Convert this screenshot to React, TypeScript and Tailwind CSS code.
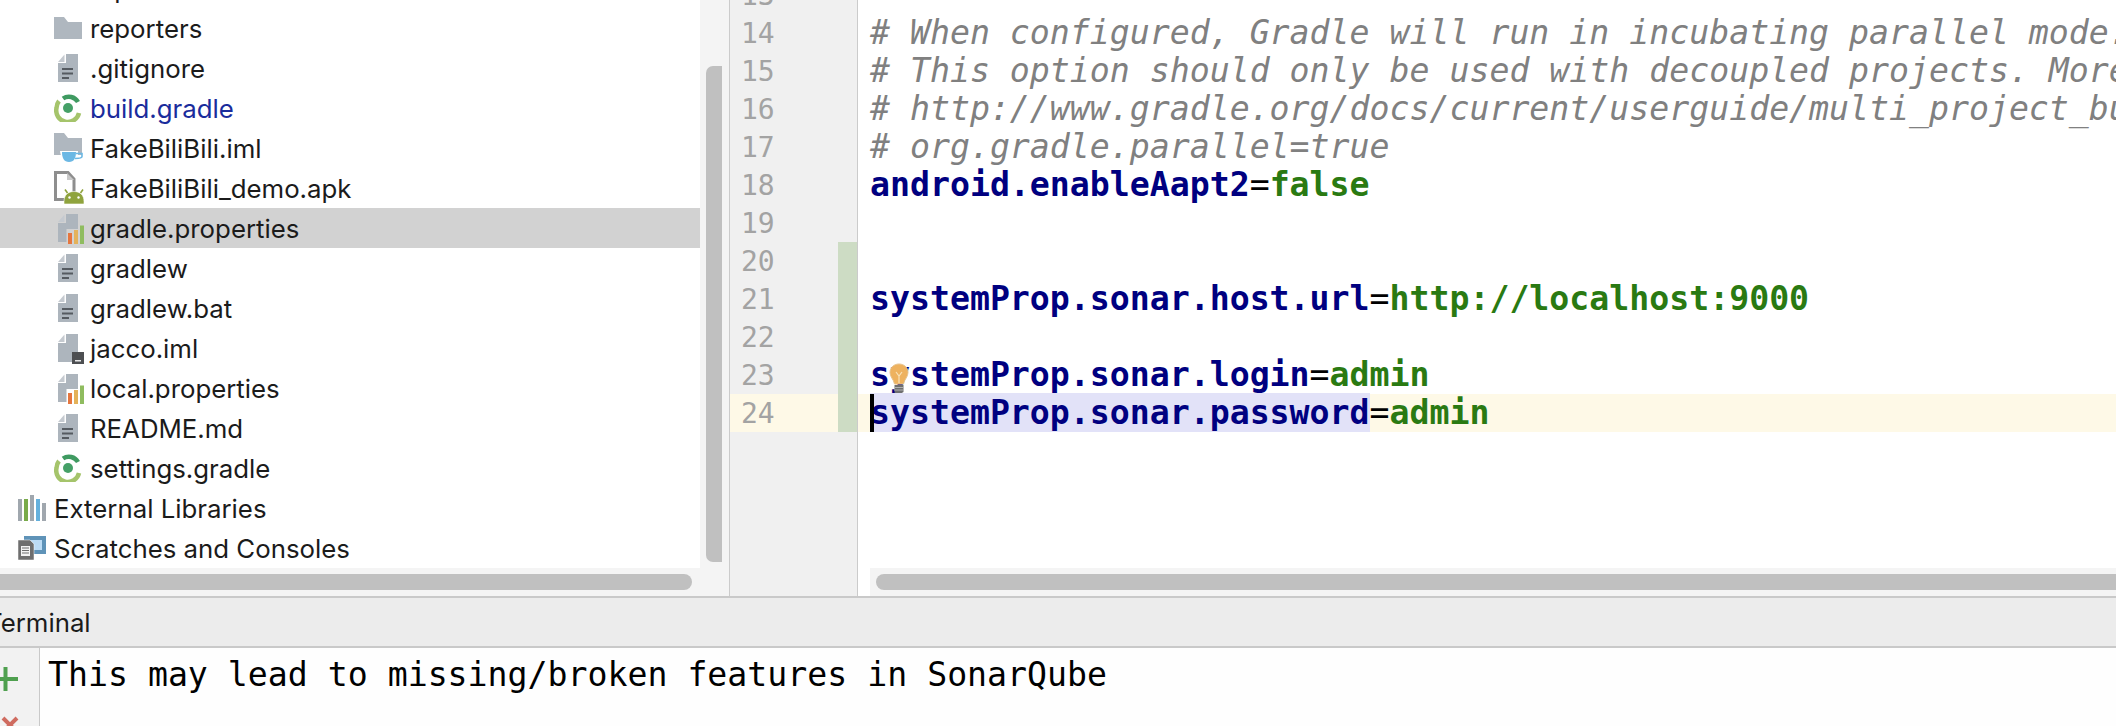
import React from 'react';

const MONO = "font-['DejaVu_Sans_Mono',monospace]";

const FileBase: React.FC<{ children?: React.ReactNode }> = ({ children }) => (
  <svg width="30" height="30" viewBox="0 0 30 30" className="shrink-0 overflow-visible">
    <path d="M4 1.5 V29 H24 V1 H12 V10 H4 Z" fill="#adb5bd" />
    <path d="M4 9 L10.5 1.5 V9 Z" fill="#c5cad0" />
    {children}
  </svg>
);

const TextFileIcon = () => (
  <FileBase>
    <rect x="8" y="15" width="11" height="2" fill="#555a60" />
    <rect x="8" y="19.5" width="11" height="2" fill="#555a60" />
    <rect x="8" y="24" width="7" height="2" fill="#555a60" />
  </FileBase>
);

const PropsIcon = () => (
  <svg width="30" height="30" viewBox="0 0 30 30" className="shrink-0 overflow-visible">
    <path d="M4 10 H12 V1 H24 V16 H12.5 V29 H4 Z" fill="#adb5bd" />
    <path d="M4 9 L10.5 1.5 V9 Z" fill="#c5cad0" />
    <rect x="14" y="20" width="4" height="11" fill="#e5763f" />
    <rect x="20" y="17" width="4" height="14" fill="#e4b25a" />
    <rect x="26" y="12.5" width="4" height="18.5" fill="#8fbc5f" />
  </svg>
);

const ImlIcon = () => (
  <FileBase>
    <rect x="18" y="19" width="12" height="12" fill="#4d4f52" />
    <rect x="21" y="27" width="6" height="1.5" fill="#e8e8e8" />
  </FileBase>
);

const FolderIcon = () => (
  <svg width="28" height="22" viewBox="0 0 28 22" className="shrink-0">
    <path d="M0 0 H10 L14 5 H28 V22 H0 Z" fill="#afb7bf" />
  </svg>
);

const ModuleIcon = () => (
  <svg width="30" height="30" viewBox="0 0 30 30" className="shrink-0">
    <path d="M0 0 H10 L14 5 H28 V22 H0 Z" fill="#afb7bf" />
    <path d="M6 18 H24 V22 H30 V25 H23 C22 28 19 30 15 30 C10 30 7 26 6 18 Z" fill="#ffffff" />
    <path d="M8 19 H22 C22 25 20 29 15 29 C10 29 8 25 8 19 Z" fill="#6cb8e4" />
    <path d="M22 20.5 H28 V23.5 C28 25 26 25.5 21 25.5" fill="none" stroke="#6cb8e4" strokeWidth="1.6" />
  </svg>
);

const ApkIcon = () => (
  <svg width="30" height="34" viewBox="0 0 30 34" className="shrink-0">
    <path d="M1.5 1.5 H14 L20 8 V28.5 H1.5 Z" fill="#ffffff" stroke="#8e8e8e" strokeWidth="3" />
    <path d="M13 2 V9 H20" fill="#c9c9c9" />
    <path d="M10 30.5 C10 24 14 20.5 20 20.5 C26 20.5 30 24 30 30.5 V33 H10 Z" fill="#8fa33d" stroke="#ffffff" strokeWidth="0.6" />
    <path d="M13.5 22 L11 18.5 M26.5 22 L29 18.5" stroke="#8fa33d" strokeWidth="1.6" />
    <circle cx="15.5" cy="26.5" r="1.2" fill="#ffffff" />
    <circle cx="24.5" cy="26.5" r="1.2" fill="#ffffff" />
  </svg>
);

const GradleIcon = () => (
  <svg width="28" height="28" viewBox="0 0 28 28" className="shrink-0">
    <path d="M9 4.5 A10.5 10.5 0 0 1 24 8" fill="none" stroke="#3f9a61" strokeWidth="4.5" />
    <path d="M5 7 A11.5 11.5 0 0 0 2.5 14 A11.5 11.5 0 0 0 25 19" fill="none" stroke="#a5c46b" strokeWidth="4.5" />
    <circle cx="14" cy="14" r="5" fill="#45a067" />
  </svg>
);

const LibrariesIcon = () => (
  <svg width="28" height="26" viewBox="0 0 28 26" className="shrink-0">
    <rect x="0" y="4" width="4" height="22" fill="#a0a7ae" />
    <rect x="6" y="4" width="4" height="22" fill="#79ab4a" />
    <rect x="12" y="0" width="4" height="26" fill="#a0a7ae" />
    <rect x="18" y="4" width="4" height="22" fill="#64b0dc" />
    <rect x="24" y="8" width="4" height="18" fill="#a0a7ae" />
  </svg>
);

const ScratchIcon = () => (
  <svg width="28" height="24" viewBox="0 0 28 24" className="shrink-0">
    <rect x="6" y="0" width="22" height="18" fill="#5f93b8" />
    <rect x="11" y="4" width="13" height="10" fill="#bcdcf5" />
    <path d="M0 4 H12 L16 8 V24 H0 Z" fill="#6e6e6e" stroke="#ffffff" strokeWidth="0.5" />
    <rect x="3" y="10" width="9" height="10" fill="#f2f2f2" />
    <path d="M4 12 H11 M4 14.5 H11 M4 17 H11" stroke="#6e6e6e" strokeWidth="1" />
  </svg>
);

type TreeRow = { name: string; icon: React.ReactNode; depth?: number; color?: string; selected?: boolean };

const treeRows: TreeRow[] = [
  { name: 'reports', icon: <FolderIcon /> },
  { name: 'reporters', icon: <FolderIcon /> },
  { name: '.gitignore', icon: <TextFileIcon /> },
  { name: 'build.gradle', icon: <GradleIcon />, color: 'text-[#1a2c9c]' },
  { name: 'FakeBiliBili.iml', icon: <ModuleIcon /> },
  { name: 'FakeBiliBili_demo.apk', icon: <ApkIcon /> },
  { name: 'gradle.properties', icon: <PropsIcon />, selected: true },
  { name: 'gradlew', icon: <TextFileIcon /> },
  { name: 'gradlew.bat', icon: <TextFileIcon /> },
  { name: 'jacco.iml', icon: <ImlIcon /> },
  { name: 'local.properties', icon: <PropsIcon /> },
  { name: 'README.md', icon: <TextFileIcon /> },
  { name: 'settings.gradle', icon: <GradleIcon /> },
  { name: 'External Libraries', icon: <LibrariesIcon />, depth: 1 },
  { name: 'Scratches and Consoles', icon: <ScratchIcon />, depth: 1 },
];

const Key: React.FC<{ children: React.ReactNode }> = ({ children }) => (
  <span className="font-bold text-[#000080]">{children}</span>
);
const Val: React.FC<{ children: React.ReactNode }> = ({ children }) => (
  <span className="font-bold text-[#2a7a12]">{children}</span>
);
const Comment: React.FC<{ children: React.ReactNode }> = ({ children }) => (
  <span className="italic text-[#808080]">{children}</span>
);

type CodeLine = { n: number; changed?: boolean; current?: boolean; code?: React.ReactNode };

const codeLines: CodeLine[] = [
  { n: 13 },
  { n: 14, code: <Comment># When configured, Gradle will run in incubating parallel mode.</Comment> },
  { n: 15, code: <Comment># This option should only be used with decoupled projects. More details, visit</Comment> },
  { n: 16, code: <Comment># http://www.gradle.org/docs/current/userguide/multi_project_builds.html#sec:decoupled_projects</Comment> },
  { n: 17, code: <Comment># org.gradle.parallel=true</Comment> },
  { n: 18, code: <><Key>android.enableAapt2</Key>=<Val>false</Val></> },
  { n: 19 },
  { n: 20, changed: true },
  { n: 21, changed: true, code: <><Key>systemProp.sonar.host.url</Key>=<Val>http://localhost:9000</Val></> },
  { n: 22, changed: true },
  { n: 23, changed: true, code: <><Key>systemProp.sonar.login</Key>=<Val>admin</Val></> },
  {
    n: 24,
    changed: true,
    current: true,
    code: (
      <>
        <span className="bg-[#e2e2f8]"><Key>systemProp.sonar.password</Key></span>=<Val>admin</Val>
      </>
    ),
  },
];

const Bulb = () => (
  <svg width="20" height="31" viewBox="0 0 20 31" className="absolute left-[31px] top-[7px]">
    <path d="M10 1 C4.5 1 1 5 1 9.5 C1 14 4.5 16 5.5 21 H14.5 C15.5 16 19 14 19 9.5 C19 5 15.5 1 10 1 Z" fill="#eeb25f" stroke="#e8c38c" />
    <path d="M7 9 L10 13 L13 9 M10 13 V20" fill="none" stroke="#f8e2b8" strokeWidth="1.2" />
    <path d="M5.5 22 H14.5 V29 L12 30.5 H6 L5.5 29 Z" fill="#6f6f6f" />
    <path d="M5 24.5 H15 M5 27 H15" stroke="#b8b8b8" strokeWidth="0.9" />
  </svg>
);

export default function App() {
  return (
    <div className="flex h-[726px] w-[2116px] flex-col overflow-hidden bg-white">
      <div className="flex h-[596px] shrink-0">
        {/* project tree */}
        <div className="flex w-[722px] shrink-0 flex-col bg-[#f4f4f4]">
          <div className="flex h-[568px] shrink-0">
            <div className="h-full w-[700px] shrink-0 overflow-hidden bg-white">
              <div className="mt-[-32px] font-['Inter',sans-serif] text-[25.8px] text-[#1b1b1b]">
                {treeRows.map((row) => (
                  <div
                    key={row.name}
                    className={`flex h-[40px] items-center ${row.selected ? 'bg-[#d2d2d2]' : ''}`}
                  >
                    <div className={`flex h-full shrink-0 items-center ${row.depth ? 'w-[54px] pl-[18px]' : 'w-[90px] pl-[54px]'}`}>
                      {row.icon}
                    </div>
                    <span className={`pt-[2px] ${row.color ?? ''}`}>{row.name}</span>
                  </div>
                ))}
              </div>
            </div>
            <div className="flex-1 pt-[66px] pl-[6px] pb-[6px]">
              <div className="h-full rounded-l-[7px] bg-[#c0c0c0]" />
            </div>
          </div>
          <div className="pt-[6px]">
            <div className="h-[16px] w-[692px] rounded-r-[8px] bg-[#c0c0c0]" />
          </div>
        </div>

        <div className="w-[7px] shrink-0 bg-[#f4f4f4]" />
        <div className="w-[1px] shrink-0 bg-[#cbcbcb]" />

        {/* editor */}
        <div className={`flex min-w-0 flex-1 flex-col overflow-hidden ${MONO}`}>
          <div className="mt-[-24px] flex flex-1 flex-col">
            {codeLines.map((line) => (
              <div key={line.n} className={`flex h-[38px] shrink-0 ${line.current ? 'bg-[#fef9e7]' : ''}`}>
                <div className={`w-[108px] shrink-0 pl-[11px] text-[28px] leading-[40px] text-[#a3a3a3] ${line.current ? '' : 'bg-[#f0f0f0]'}`}>
                  {line.n}
                </div>
                <div className={`w-[19px] shrink-0 ${line.changed ? 'bg-[#cddcc4]' : line.current ? '' : 'bg-[#f0f0f0]'}`} />
                <div className="w-[1px] shrink-0 bg-[#cbcbcb]" />
                <div className="relative flex-1 whitespace-pre pl-[12px] text-[33.2px] leading-[38px] text-black">
                  {line.current && <div className="absolute left-[12px] top-0 h-[38px] w-[4px] bg-black" />}
                  {line.code}
                  {line.n === 23 && <Bulb />}
                </div>
              </div>
            ))}
            <div className="flex flex-1">
              <div className="w-[127px] shrink-0 bg-[#f0f0f0]" />
              <div className="w-[1px] shrink-0 bg-[#cbcbcb]" />
              <div className="flex flex-1 flex-col justify-end">
                <div className="ml-[12px] h-[28px] bg-[#f4f4f4] pl-[6px] pt-[6px]">
                  <div className="h-[16px] rounded-l-[8px] bg-[#c0c0c0]" />
                </div>
              </div>
            </div>
          </div>
        </div>
      </div>

      {/* terminal */}
      <div className="flex h-[52px] shrink-0 items-center border-y-2 border-[#c9c9c9] bg-[#ececec] pt-[2px] font-['Inter',sans-serif] text-[25.8px] text-[#1b1b1b]">
        <span className="ml-[-14px]">Terminal</span>
      </div>
      <div className="flex flex-1 bg-[#fefefe]">
        <div className="relative w-[39px] shrink-0 overflow-hidden bg-[#f2f2f2]">
          <svg width="22" height="26" viewBox="0 0 22 26" className="absolute left-[-3px] top-[18px]">
            <path d="M0 13 H21 M8.5 1 V25" stroke="#4fa04f" strokeWidth="4" fill="none" />
          </svg>
          <svg width="20" height="20" viewBox="0 0 20 20" className="absolute left-[0px] top-[68px]">
            <path d="M3 2 L17 16 M17 2 L3 16" stroke="#cf6c60" strokeWidth="4" fill="none" />
          </svg>
        </div>
        <div className="w-[1px] shrink-0 bg-[#c9c9c9]" />
        <div className={`pl-[8px] pt-[8px] text-[33.2px] leading-[38px] text-black ${MONO}`}>
          This may lead to missing/broken features in SonarQube
        </div>
      </div>
    </div>
  );
}
